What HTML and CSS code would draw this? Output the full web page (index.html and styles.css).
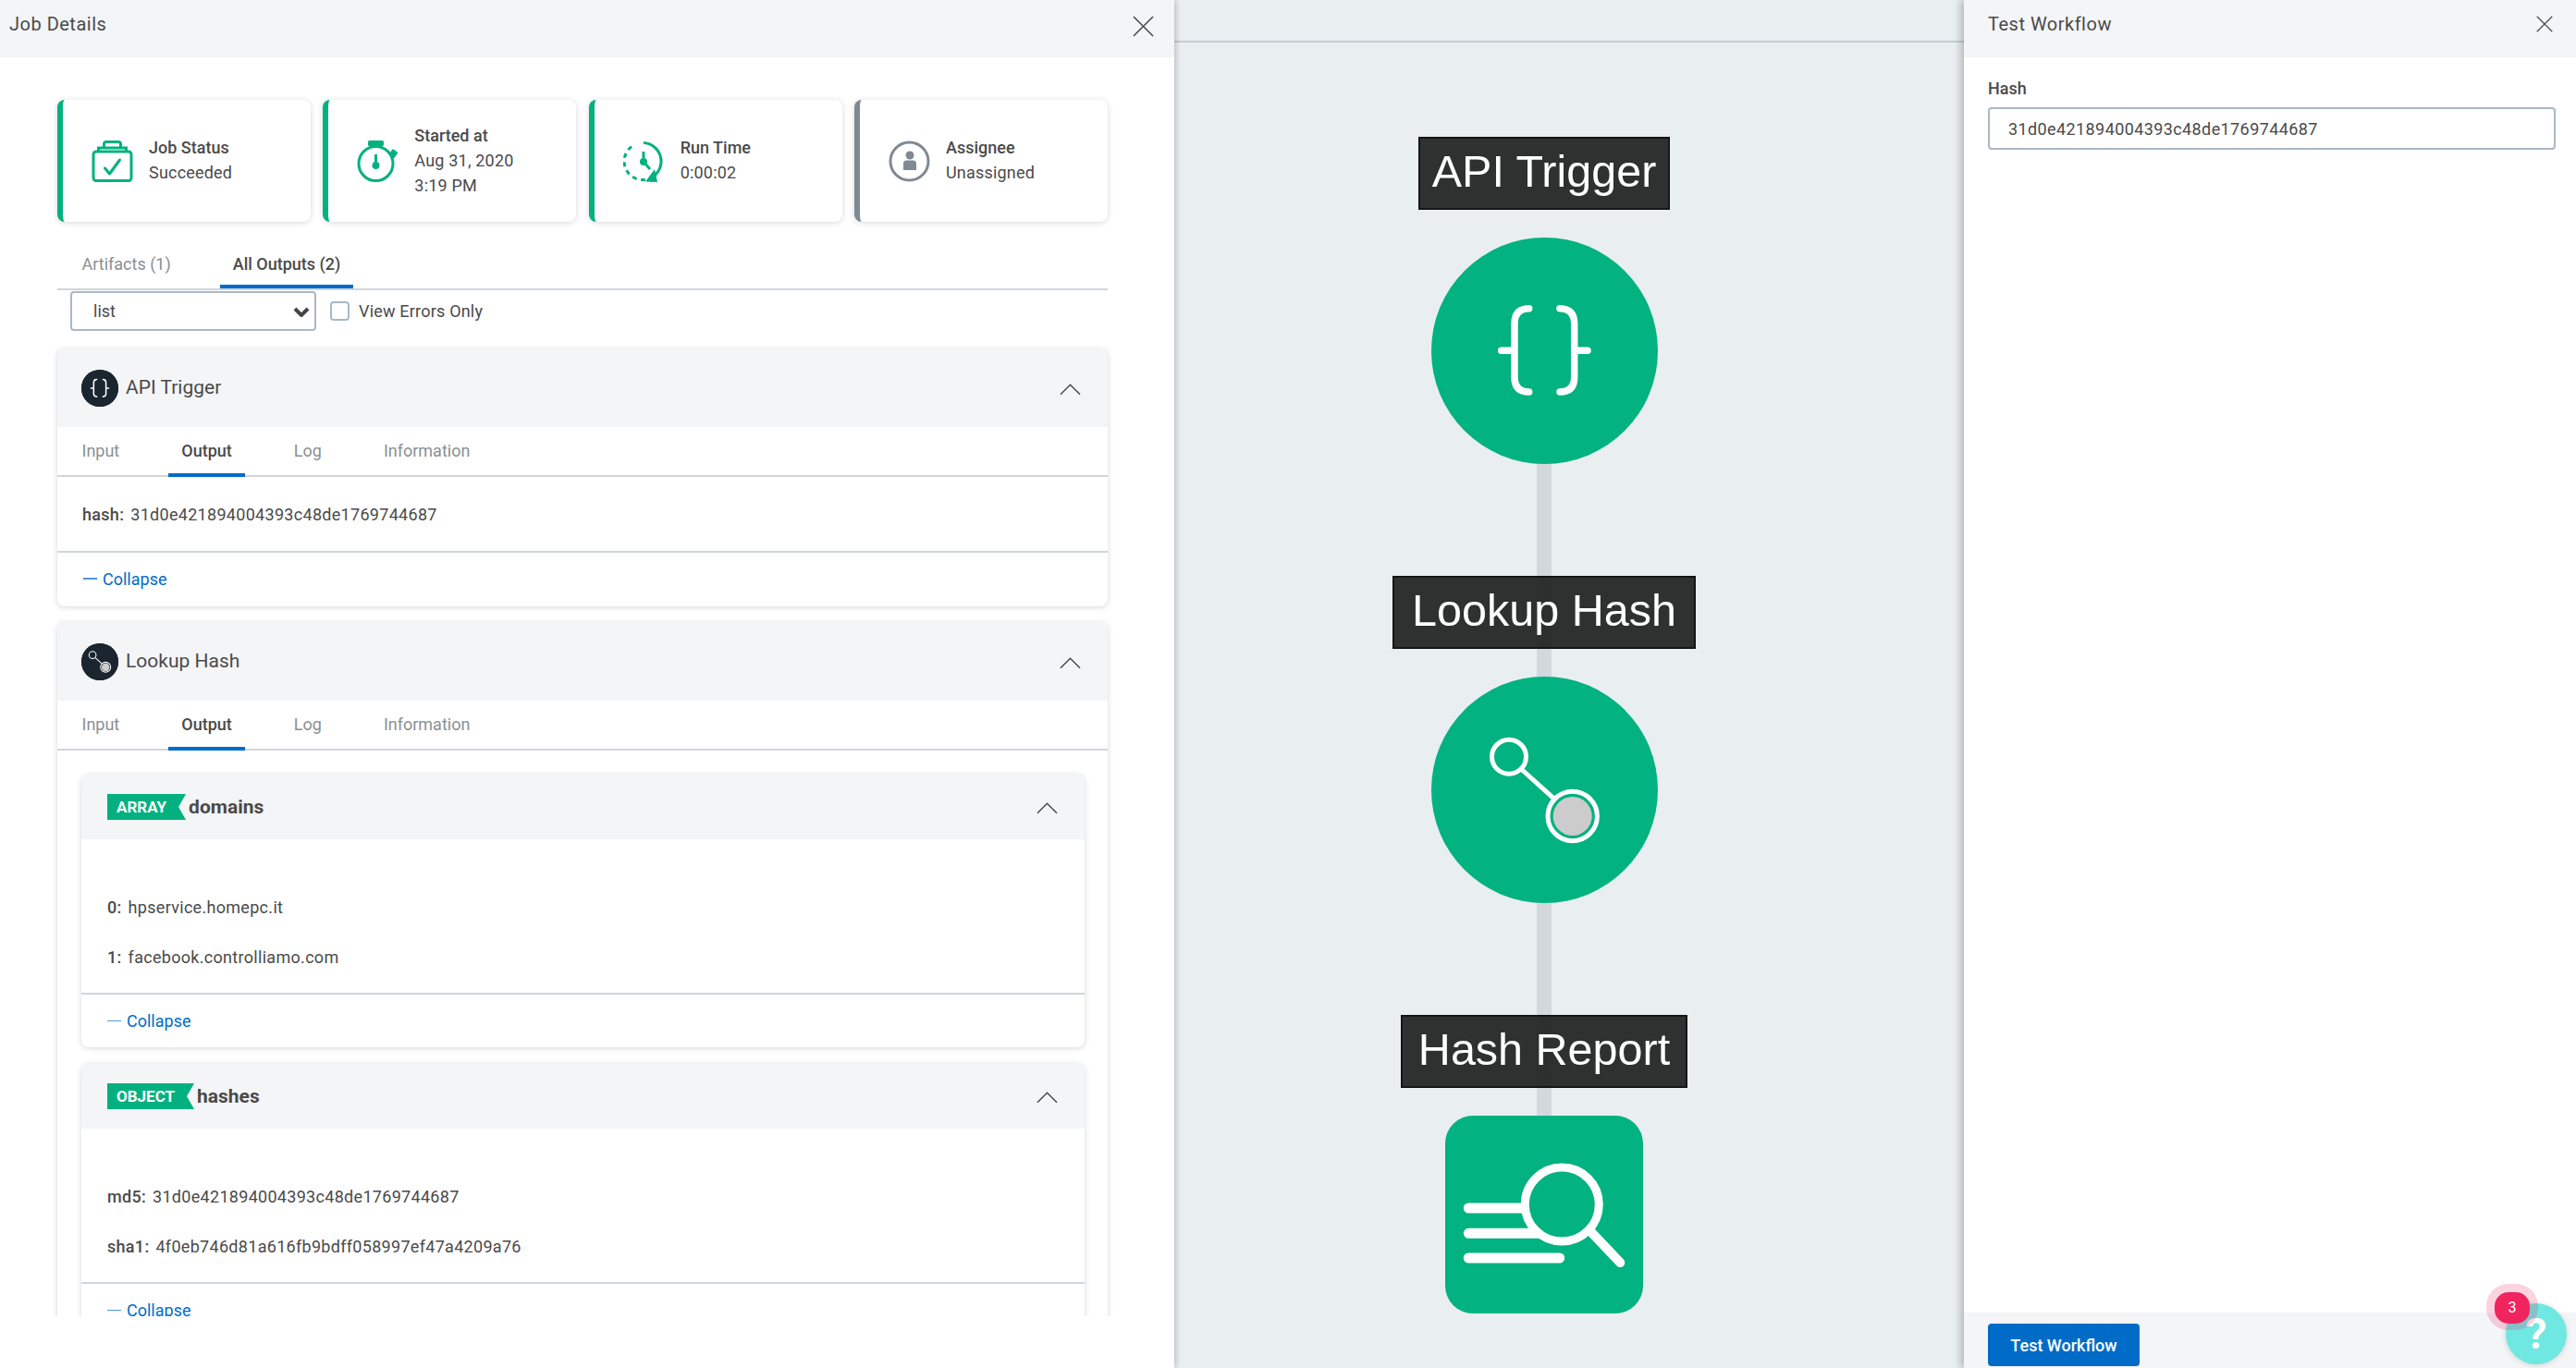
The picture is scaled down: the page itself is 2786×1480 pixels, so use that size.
FILE: index.html
```html
<!DOCTYPE html>
<html lang="en">
<head>
  <meta charset="UTF-8" />
  <title>Job Details</title>
  <link rel="stylesheet" href="styles.css">
</head>
<body>

  <!-- job details panel -->
  <section class="panel panel-left">
    <header class="panel-head">
      <span class="panel-title">Job Details</span>
      <svg class="close close-big" viewBox="0 0 24 24"><path d="M1 1 L23 23 M23 1 L1 23" /></svg>
    </header>

    <div class="panel-scroll">
      <div class="stats">
        <div class="stat">
          <svg class="stat-icon" viewBox="0 0 44 45" fill="none" stroke="#02b17f" stroke-width="3">
            <rect x="1.5" y="12" width="41" height="31.5" rx="3" />
            <path d="M7 12 V8 H37 V12" />
            <path d="M13 8 V4 Q13 1.5 15.5 1.5 H28.5 Q31 1.5 31 4 V8" />
            <path d="M14 30 L19 36 L30 21" stroke-linecap="round" stroke-linejoin="round" />
          </svg>
          <div class="stat-text"><b>Job Status</b><span>Succeeded</span></div>
        </div>
        <div class="stat">
          <svg class="stat-icon" viewBox="0 0 45 45" fill="none" stroke="#02b17f" stroke-width="3">
            <circle cx="20.5" cy="25" r="18.5" />
            <rect x="12" y="0" width="17" height="6" rx="1.5" fill="#02b17f" stroke="none" />
            <rect x="36" y="10" width="7" height="8" rx="1" fill="#02b17f" stroke="none" transform="rotate(35 39 14)" />
            <path d="M20.5 15 V26" />
            <circle cx="20.5" cy="27" r="4" fill="#02b17f" stroke="none" />
          </svg>
          <div class="stat-text"><b>Started at</b><span>Aug 31, 2020</span><span>3:19 PM</span></div>
        </div>
        <div class="stat">
          <svg class="stat-icon" viewBox="0 0 45 45" fill="none" stroke="#02b17f" stroke-width="3">
            <path d="M22 2.5 A20 20 0 0 1 33 38.5" />
            <path d="M24 42.4 A20 20 0 0 1 12 4.8" stroke-dasharray="5 4.5" />
            <path d="M24 44.5 L37 45 L34 31 Z" fill="#02b17f" stroke="none" />
            <path d="M22 12 V23 L29 31" />
            <circle cx="22" cy="23" r="4" fill="#02b17f" stroke="none" />
          </svg>
          <div class="stat-text"><b>Run Time</b><span>0:00:02</span></div>
        </div>
        <div class="stat stat-grey">
          <svg class="stat-icon" viewBox="0 0 45 45" fill="none" stroke="#7f8993" stroke-width="3">
            <circle cx="22.5" cy="22.5" r="20.5" />
            <circle cx="23" cy="16" r="4.5" fill="#7f8993" stroke="none" />
            <path d="M16 32 V25 Q16 21.5 19.5 21.5 H26.5 Q30 21.5 30 25 V32 Z" fill="#7f8993" stroke="none" />
          </svg>
          <div class="stat-text"><b>Assignee</b><span>Unassigned</span></div>
        </div>
      </div>

      <div class="tabs tabs-main">
        <span class="tab">Artifacts (1)</span>
        <span class="tab active">All Outputs (2)</span>
      </div>

      <div class="filter-row">
        <div class="select-wrap">
          <select class="select"><option>list</option></select>
          <svg class="select-arrow" viewBox="0 0 18 11"><path d="M2 2 L9 9 L16 2" /></svg>
        </div>
        <span class="checkbox"></span>
        <span class="check-label">View Errors Only</span>
      </div>

      <!-- API Trigger output -->
      <div class="block">
        <div class="block-head">
          <svg class="avatar" viewBox="25 25 195 195">
            <circle cx="122.5" cy="122.5" r="122" fill="#1a2530" />
            <path d="M105.7 76.7 Q90 77 90 93 V151 Q90 167 105.7 167 M75.7 122.3 H90 M139 76.7 Q154.7 77 154.7 93 V151 Q154.7 167 139 167 M154.7 122.3 H169" fill="none" stroke="#fff" stroke-width="7.5" stroke-linecap="round" />
          </svg>
          <span class="block-title">API Trigger</span>
          <svg class="chevron" viewBox="0 0 24 13"><path d="M1 12 L12 1 L23 12" /></svg>
        </div>
        <div class="tabs tabs-sub">
          <span class="tab">Input</span>
          <span class="tab active">Output</span>
          <span class="tab">Log</span>
          <span class="tab">Information</span>
        </div>
        <div class="block-body">
          <div class="row"><b>hash:</b>31d0e421894004393c48de1769744687</div>
        </div>
        <div class="collapse"><i class="dash"></i>Collapse</div>
      </div>

      <!-- Lookup Hash output -->
      <div class="block">
        <div class="block-head">
          <svg class="avatar" viewBox="25 25 195 195">
            <circle cx="122.5" cy="122.5" r="122" fill="#1a2530" />
            <circle cx="84" cy="86.7" r="18.5" fill="none" stroke="#fff" stroke-width="5" />
            <path d="M98.3 101 L132.3 131.7" stroke="#fff" stroke-width="5" />
            <circle cx="152.7" cy="151" r="26.7" fill="none" stroke="#fff" stroke-width="5" />
            <circle cx="152.7" cy="151" r="21" fill="#ccc" />
          </svg>
          <span class="block-title">Lookup Hash</span>
          <svg class="chevron" viewBox="0 0 24 13"><path d="M1 12 L12 1 L23 12" /></svg>
        </div>
        <div class="tabs tabs-sub">
          <span class="tab">Input</span>
          <span class="tab active">Output</span>
          <span class="tab">Log</span>
          <span class="tab">Information</span>
        </div>
        <div class="block-nested">
          <div class="inner">
            <div class="inner-head">
              <span class="tag">ARRAY</span>
              <span class="inner-title">domains</span>
              <svg class="chevron" viewBox="0 0 24 13"><path d="M1 12 L12 1 L23 12" /></svg>
            </div>
            <div class="inner-body">
              <div class="inner-row"><b>0:</b>hpservice.homepc.it</div>
              <div class="inner-row"><b>1:</b>facebook.controlliamo.com</div>
            </div>
            <div class="collapse collapse-inner"><i class="dash"></i>Collapse</div>
          </div>
          <div class="inner">
            <div class="inner-head">
              <span class="tag">OBJECT</span>
              <span class="inner-title">hashes</span>
              <svg class="chevron" viewBox="0 0 24 13"><path d="M1 12 L12 1 L23 12" /></svg>
            </div>
            <div class="inner-body">
              <div class="inner-row"><b>md5:</b>31d0e421894004393c48de1769744687</div>
              <div class="inner-row"><b>sha1:</b>4f0eb746d81a616fb9bdff058997ef47a4209a76</div>
            </div>
            <div class="collapse collapse-inner"><i class="dash"></i>Collapse</div>
          </div>
        </div>
      </div>
    </div>
  </section>

  <!-- workflow canvas -->
  <main class="canvas">
    <div class="canvas-bar"></div>
    <div class="edge"></div>

    <div class="node-label label-api">API Trigger</div>
    <svg class="node node-api" viewBox="0 0 245 245">
      <circle cx="122.5" cy="122.5" r="122.5" fill="#02b280" />
      <path d="M105.7 76.7 Q90 77 90 93 V151 Q90 167 105.7 167 M75.7 122.3 H90 M139 76.7 Q154.7 77 154.7 93 V151 Q154.7 167 139 167 M154.7 122.3 H169" fill="none" stroke="#fff" stroke-width="7.5" stroke-linecap="round" />
    </svg>

    <div class="node-label label-lookup">Lookup Hash</div>
    <svg class="node node-lookup" viewBox="0 0 245 245">
      <circle cx="122.5" cy="122.5" r="122.5" fill="#02b280" />
      <circle cx="84" cy="86.7" r="18.5" fill="none" stroke="#fff" stroke-width="5" />
      <path d="M98.3 101 L132.3 131.7" stroke="#fff" stroke-width="5" />
      <circle cx="152.7" cy="151" r="26.7" fill="none" stroke="#fff" stroke-width="5" />
      <circle cx="152.7" cy="151" r="21" fill="#ccc" />
    </svg>

    <div class="node-label label-report">Hash Report</div>
    <svg class="node node-report" viewBox="0 0 214 214">
      <rect width="214" height="214" rx="30" fill="#02b280" />
      <path d="M25.3 100 H84 M25.3 127.3 H103 M25.3 154 H123.7" stroke="#fff" stroke-width="11" stroke-linecap="round" />
      <circle cx="126.3" cy="96" r="40" fill="#02b280" stroke="#fff" stroke-width="9" />
      <path d="M158.7 126.7 L189.3 159" stroke="#fff" stroke-width="10" stroke-linecap="round" />
    </svg>
  </main>

  <!-- test workflow panel -->
  <aside class="panel panel-right">
    <header class="panel-head">
      <span class="panel-title">Test Workflow</span>
      <svg class="close" viewBox="0 0 24 24"><path d="M1 1 L23 23 M23 1 L1 23" /></svg>
    </header>
    <div class="form">
      <label class="field-label" for="hash">Hash</label>
      <input class="field" id="hash" type="text" value="31d0e421894004393c48de1769744687" />
    </div>
    <footer class="panel-foot">
      <button class="btn" type="button">Test Workflow</button>
    </footer>
  </aside>

  <div class="help">?</div>
  <div class="help-halo"></div>
  <div class="help-count">3</div>

</body>
</html>
```

FILE: styles.css
```css
* {
  box-sizing: border-box;
}

html, body {
  height: 100%;
}

body {
  margin: 0;
  display: flex;
  height: 1480px;
  overflow: hidden;
  font-family: 'Roboto', sans-serif;
  font-size: 18px;
  color: #4a4a4a;
  background: #e9eef1;
  position: relative;
}

b {
  font-weight: 700;
}

.panel {
  background: #fff;
  display: flex;
  flex-direction: column;
  height: 100%;
  position: relative;
  z-index: 2;
}

.panel-left {
  width: 1270px;
  box-shadow: 2px 0 6px rgba(0, 0, 0, 0.2);
}

.panel-right {
  width: 662px;
  box-shadow: -3px 0 8px rgba(0, 0, 0, 0.25);
}

.panel-head {
  height: 62px;
  flex: none;
  background: #f4f5f7;
  display: flex;
  align-items: center;
  justify-content: space-between;
  padding: 0 22px 10px 10px;
}

.panel-right .panel-head {
  padding: 0 25px 10px 26px;
}

.panel-title {
  font-size: 20px;
  letter-spacing: 0.5px;
}

.close {
  width: 18px;
  height: 18px;
  fill: none;
  stroke: #4a4a4a;
  stroke-width: 1.6;
}

.close-big {
  width: 23px;
  height: 23px;
  margin-top: 4px;
}

.panel-scroll {
  height: 1362px;
  overflow: hidden;
  padding: 46px 72px 0 62px;
}

.stats {
  display: grid;
  grid-template-columns: repeat(4, 274px);
  column-gap: 13.33px;
}

.stat {
  height: 132px;
  background: #fff;
  border-left: 6px solid #02b17f;
  border-radius: 8px;
  box-shadow: 0 1px 6px rgba(0, 0, 0, 0.16);
  display: flex;
  align-items: center;
  padding-left: 31px;
  gap: 17px;
}

.stat-grey {
  border-left-color: #7f8993;
}

.stat-icon {
  width: 45px;
  height: 45px;
  flex: none;
}

.stat-text {
  display: flex;
  flex-direction: column;
  line-height: 27px;
  letter-spacing: 0.2px;
  margin-top: -2px;
}

.stat-text b {
  font-weight: 500;
  letter-spacing: 0;
}

.tabs {
  display: flex;
  gap: 39px;
  border-bottom: 2px solid #d0d5da;
  padding-left: 12.5px;
}

.tabs-main {
  margin-top: 30px;
}

.tab {
  line-height: 32px;
  padding: 0 14px 6px;
  border-bottom: 4px solid transparent;
  color: #8a8f94;
}

.tab.active {
  color: #4a4a4a;
  font-weight: 500;
  border-bottom-color: #006cc8;
}

.tabs-sub {
  height: 54px;
  align-items: flex-end;
}

.tabs-sub .tab {
  padding: 10px 14px 8px;
  margin-bottom: -2px;
}

.filter-row {
  display: flex;
  align-items: center;
  margin-top: 1px;
  padding-left: 14px;
}

.select-wrap {
  position: relative;
  width: 266px;
  height: 43px;
}

.select {
  width: 100%;
  height: 100%;
  appearance: none;
  background: #fff;
  border: 2px solid #aab8c5;
  border-radius: 4px;
  font: inherit;
  color: inherit;
  padding-left: 23px;
}

.select-arrow {
  position: absolute;
  right: 7px;
  top: 17px;
  width: 18px;
  height: 11px;
  fill: none;
  stroke: #444;
  stroke-width: 4;
  pointer-events: none;
}

.checkbox {
  width: 21px;
  height: 21px;
  margin-left: 15px;
  border: 2px solid #aab8c5;
  border-radius: 4px;
}

.check-label {
  margin-left: 10px;
  margin-top: -1px;
  letter-spacing: 0.2px;
}

.block {
  margin-top: 19px;
  border-radius: 8px;
  background: #fff;
  box-shadow: 0 1px 6px rgba(0, 0, 0, 0.16);
  overflow: hidden;
}

.block + .block {
  margin-top: 17px;
}

.block-head {
  height: 85px;
  background: #f4f5f7;
  display: flex;
  align-items: center;
  padding: 0 29px 0 26px;
}

.avatar {
  width: 40px;
  height: 40px;
  margin-right: 8px;
  border-radius: 50%;
  background: #1a2530;
}

.block-title {
  font-size: 21px;
  margin-top: -1px;
}

.chevron {
  width: 23px;
  height: 13px;
  margin-left: auto;
  margin-top: 3px;
  fill: none;
  stroke: #4a4a4a;
  stroke-width: 1.5;
}

.block-body {
  height: 80px;
  padding: 25px 27px 0;
}

.row,
.inner-row {
  letter-spacing: 0.3px;
  line-height: 32px;
}

.row b,
.inner-row b {
  font-weight: 500;
  margin-right: 7px;
}

.collapse {
  height: 60px;
  border-top: 2px solid #d0d5da;
  display: flex;
  align-items: center;
  padding: 0 0 2px 28px;
  color: #006cc8;
}

.dash {
  width: 15px;
  height: 1.5px;
  background: #4d98d8;
  margin-right: 6px;
}

.block-nested {
  padding: 26px 25px 0 26px;
}

.inner {
  border-radius: 8px;
  background: #fff;
  box-shadow: 0 1px 6px rgba(0, 0, 0, 0.16);
  overflow: hidden;
}

.inner + .inner {
  margin-top: 18px;
}

.inner-head {
  height: 70px;
  background: #f4f5f7;
  display: flex;
  align-items: center;
  padding: 0 29px 0 28px;
}

.tag {
  height: 28px;
  line-height: 28px;
  padding: 0 21px 0 10px;
  background: #02b17f;
  color: #fff;
  font-size: 17px;
  font-weight: 700;
  clip-path: polygon(0 0, 100% 0, calc(100% - 8px) 50%, 100% 100%, 0 100%);
  margin-right: 3px;
}

.inner-title {
  font-size: 21px;
  font-weight: 700;
  margin-top: -1px;
}

.inner-body {
  height: 166px;
  padding: 47px 28px 0;
}

.inner-row {
  height: 54px;
  line-height: 54px;
}

.collapse-inner {
  height: 59px;
  padding-bottom: 0;
}

/* canvas */
.canvas {
  flex: 1;
  position: relative;
  height: 100%;
}

.canvas-bar {
  height: 46px;
  border-bottom: 2px solid #c5ccd1;
}

.edge {
  position: absolute;
  left: 392px;
  top: 501px;
  width: 16px;
  height: 706px;
  background: #d3d8dc;
}

.node-label {
  position: absolute;
  height: 79px;
  background: rgba(32, 33, 33, 0.93);
  border: 2px solid #161717;
  outline: 1px solid rgba(0, 0, 0, 0.25);
  outline-offset: -1px;
  color: #fff;
  font-family: 'Liberation Sans', sans-serif;
  font-size: 48.5px;
  line-height: 70px;
  text-align: center;
  white-space: nowrap;
}

.label-api {
  left: 264px;
  top: 148px;
  width: 272px;
}

.label-lookup {
  left: 236px;
  top: 623px;
  width: 328px;
}

.label-report {
  left: 245px;
  top: 1098px;
  width: 310px;
}

.node {
  position: absolute;
  display: block;
}

.node-api {
  left: 278px;
  top: 257px;
  width: 245px;
  height: 245px;
}

.node-lookup {
  left: 278px;
  top: 732px;
  width: 245px;
  height: 245px;
}

.node-report {
  left: 293px;
  top: 1207px;
  width: 214px;
  height: 214px;
}

/* test workflow form */
.form {
  flex: 1;
  padding: 22px 22px 0 26px;
}

.field-label {
  display: block;
  font-weight: 500;
  line-height: 24px;
  margin-bottom: 8px;
}

.field {
  width: 100%;
  height: 46px;
  border: 2px solid #a9b8c4;
  border-radius: 4px;
  padding: 0 20px;
  font: inherit;
  letter-spacing: 0.4px;
  color: inherit;
  outline: none;
}

.panel-foot {
  height: 60px;
  flex: none;
  background: #f4f5f7;
  padding: 12px 0 0 26px;
}

.btn {
  width: 164px;
  height: 46px;
  background: #006cc8;
  border: none;
  border-radius: 4px;
  color: #fff;
  font: inherit;
  font-weight: 500;
}

/* help bubble */
.help {
  position: absolute;
  left: 2710px;
  top: 1410px;
  width: 66px;
  height: 66px;
  border-radius: 50%;
  background: #6fe8e2;
  box-shadow: 0 1px 6px rgba(0, 0, 0, 0.15);
  color: #fff;
  font-size: 46px;
  font-weight: 700;
  line-height: 66px;
  text-align: center;
  z-index: 3;
}

.help-halo {
  position: absolute;
  left: 2689px;
  top: 1389px;
  width: 56px;
  height: 50px;
  border-radius: 24px;
  background: rgba(240, 36, 95, 0.2);
  z-index: 4;
}

.help-count {
  position: absolute;
  left: 2698px;
  top: 1398px;
  width: 38px;
  height: 34px;
  border-radius: 15px;
  background: #f0245f;
  color: #fff;
  font-size: 16px;
  line-height: 34px;
  text-align: center;
  z-index: 5;
}
```
